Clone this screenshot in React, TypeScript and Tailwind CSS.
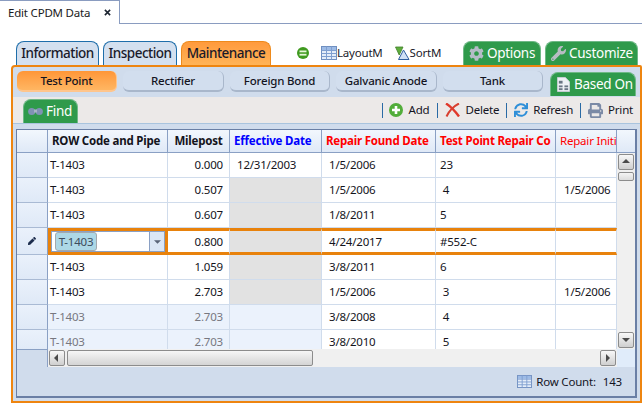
import { FaCog, FaPen, FaPrint, FaSync, FaWrench } from "react-icons/fa"

const cols = "grid grid-cols-[31px_120px_62px_92px_114px_120px_61px]"
const cellLine = "border-r border-b border-[#d0dcec]"

const rows = [
  { code: "T-1403", mile: "0.000", eff: "12/31/2003", found: "1/5/2006", repair: "23", init: "" },
  { code: "T-1403", mile: "0.507", eff: "", found: "1/5/2006", repair: " 4", init: "1/5/2006", gray: true },
  { code: "T-1403", mile: "0.607", eff: "", found: "1/8/2011", repair: "5", init: "", gray: true },
  { code: "T-1403", mile: "0.800", eff: "", found: "4/24/2017", repair: "#552-C", init: "", gray: true, editing: true },
  { code: "T-1403", mile: "1.059", eff: "", found: "3/8/2011", repair: "6", init: "", gray: true },
  { code: "T-1403", mile: "2.703", eff: "", found: "1/5/2006", repair: " 3", init: "1/5/2006", gray: true },
  { code: "T-1403", mile: "2.703", eff: "", found: "3/8/2008", repair: " 4", init: "", dim: true },
  { code: "T-1403", mile: "2.703", eff: "", found: "3/8/2010", repair: " 5", init: "", dim: true },
]

function GridIcon({ className }: { className?: string }) {
  return (
    <svg viewBox="0 0 16 14" className={className}>
      <rect x="0.5" y="0.5" width="15" height="13" fill="#e4edf9" stroke="#6f8fc0" />
      <rect x="1" y="1" width="14" height="3" fill="#9dbbe6" />
      <path d="M0.5 4.5h15M0.5 7.5h15M0.5 10.5h15M5.5 0.5v13M10.5 0.5v13" stroke="#7f9fd0" fill="none" />
    </svg>
  )
}

function MainTab({ label, active, width }: { label: string; active?: boolean; width: string }) {
  return (
    <div
      className={
        "h-[24px] flex items-center justify-center rounded-t-[8px] border border-b-0 text-[13.5px] font-medium tracking-[-0.5px] text-[#1a1a2a] " +
        width +
        " " +
        (active
          ? "border-[#ee8a1c] bg-gradient-to-b from-[#ff9a3c] to-[#ffb458]"
          : "border-[#1f6eaa] bg-[#d4e0ef]")
      }
    >
      {label}
    </div>
  )
}

function GreenTab({ children, className }: { children: React.ReactNode; className?: string }) {
  return (
    <div
      className={
        "h-[24px] flex items-center rounded-t-[8px] border border-b-0 border-[#6fb886] bg-[#2f9a4b] text-[13.5px] tracking-[-0.3px] text-white whitespace-nowrap " +
        className
      }
    >
      {children}
    </div>
  )
}

function SubButton({ label, active, width }: { label: string; active?: boolean; width: string }) {
  return (
    <div
      className={
        "h-[21px] flex items-center justify-center rounded-[6px] font-medium text-[#14141f] border-b-2 border-r " +
        width +
        " " +
        (active
          ? "bg-gradient-to-b from-[#ff9636] to-[#ffb662] border-[#ffc58c]"
          : "bg-[#d2deee] border-[#a9b7cb]")
      }
    >
      {label}
    </div>
  )
}

function ToolSep() {
  return <div className="w-[1px] h-[15px] bg-[#2a6aa5]" />
}

function ScrollButton({ dir, className }: { dir: "up" | "down" | "left" | "right"; className?: string }) {
  const path = {
    up: "M1 6 L5 2 L9 6 Z",
    down: "M1 3 L5 7 L9 3 Z",
    left: "M6 1 L2 5 L6 9 Z",
    right: "M3 1 L7 5 L3 9 Z",
  }[dir]
  return (
    <div
      className={
        "w-[16px] h-[16px] flex items-center justify-center rounded-[2px] border border-[#8c8c8c] bg-gradient-to-b from-[#f8f8f8] to-[#cfcfcf] " +
        (className ?? "")
      }
    >
      <svg viewBox="0 0 10 10" className="w-[10px] h-[10px]">
        <path d={path} fill="#4a4a4a" />
      </svg>
    </div>
  )
}

function Row({ row }: { row: (typeof rows)[number] }) {
  const text = row.dim ? "text-[#77777f]" : "text-[#14141c]"
  const leftBg = row.dim ? "bg-[#ebf2fc]" : "bg-white"
  if (row.editing) {
    const edge = "border-y-[3px] border-[#e8820c] border-r border-r-[#d0dcec] flex items-center bg-white"
    return (
      <div className={cols + " h-[27px] shrink-0 text-[#14141c]"}>
        <div className="flex items-center justify-center border-r border-b border-r-[#8aa0c4] border-b-[#a9bad4] bg-gradient-to-b from-[#eaf1fb] to-[#dfe9f7]">
          <FaPen className="w-[8px] h-[8px] text-[#1c2c4c]" />
        </div>
        <div className="border-[3px] border-[#e8820c] bg-white">
          <div className="h-full flex items-center border border-[#8aa0c4] pl-[3px]">
            <div className="h-[19px] w-[42px] flex items-center justify-center rounded-[3px] border border-[#a3a9ae] bg-[#add8e6] text-[#3c4c5c]">
              T-1403
            </div>
            <div className="ml-auto w-[15px] h-full flex items-center justify-center border-l border-[#8aa0c4] bg-[#dbe6f5]">
              <svg viewBox="0 0 8 4" className="w-[7px] h-[4px]">
                <path d="M0 0 H8 L4 4 Z" fill="#5a6478" />
              </svg>
            </div>
          </div>
        </div>
        <div className={edge + " justify-end pr-[6px]"}>{row.mile}</div>
        <div className="border-y-[3px] border-[#e8820c] border-r border-r-[#d0dcec] bg-[#e2e2e2]" />
        <div className={edge + " pl-[7px]"}>{row.found}</div>
        <div className={edge + " pl-[4px]"}>{row.repair}</div>
        <div className={edge} />
      </div>
    )
  }
  return (
    <div className={cols + " h-[25px] shrink-0 " + text}>
      <div className="border-r border-b border-r-[#8aa0c4] border-b-[#a9bad4] bg-gradient-to-b from-[#eaf1fb] to-[#dfe9f7]" />
      <div className={cellLine + " flex items-center pl-[2px] " + leftBg}>{row.code}</div>
      <div className={cellLine + " flex items-center justify-end pr-[6px] " + leftBg}>{row.mile}</div>
      <div className={cellLine + " flex items-center pl-[7px] " + (row.gray ? "bg-[#e2e2e2]" : leftBg)}>{row.eff}</div>
      <div className={cellLine + " flex items-center pl-[7px] bg-white text-[#14141c]"}>{row.found}</div>
      <div className={cellLine + " flex items-center pl-[4px] bg-white whitespace-pre text-[#14141c]"}>{row.repair}</div>
      <div className={cellLine + " flex items-center pl-[8px] bg-white text-[#14141c]"}>{row.init}</div>
    </div>
  )
}

export default function App() {
  const head = "flex items-center border-r border-[#8aa0c4] whitespace-nowrap overflow-hidden"
  return (
    <div className="w-[642px] h-[403px] overflow-hidden bg-white flex flex-col text-[11.5px] tracking-[-0.2px] font-['Noto_Sans','Open_Sans',sans-serif]">
      {/* document tab */}
      <div className="h-[24px] shrink-0 border-b border-[#8a9cc0] flex">
        <div className="w-[120px] h-[24px] flex items-center pl-[8px] bg-white border-r border-t border-[#8a9cc0] text-[#1a1a22]">
          Edit CPDM Data
          <svg viewBox="0 0 8 8" className="ml-[14px] w-[7px] h-[7px]">
            <path d="M1 1 L7 7 M7 1 L1 7" stroke="#1c2430" strokeWidth="1.8" />
          </svg>
        </div>
      </div>

      {/* main tabs */}
      <div className="h-[41px] shrink-0 flex items-end pl-[16px] pr-[4px]">
        <MainTab label="Information" width="w-[83px]" />
        <div className="ml-[4px]">
          <MainTab label="Inspection" width="w-[74px]" />
        </div>
        <div className="ml-[4px]">
          <MainTab label="Maintenance" active width="w-[90px]" />
        </div>
        <div className="h-[24px] ml-[26px] flex items-center text-[#1a1a2a]">
          <svg viewBox="0 0 12 12" className="w-[12px] h-[12px]">
            <circle cx="6" cy="6" r="6" fill="#3f9a1f" />
            <rect x="2.5" y="3.5" width="7" height="1.8" fill="#e6f5d8" />
            <rect x="2.5" y="6.8" width="7" height="1.8" fill="#e6f5d8" />
          </svg>
          <GridIcon className="ml-[12px] w-[16px] h-[14px]" />
          <span>LayoutM</span>
          <svg viewBox="0 0 15 14" className="ml-[12px] w-[15px] h-[14px]">
            <path d="M0.5 1 H8 L4.2 9 Z" fill="#5fae3c" stroke="#3f7f2a" strokeWidth="0.8" />
            <path d="M8.5 4 L14 13.5 H3.5 Z" fill="#cfe0f5" stroke="#2f5f9f" strokeWidth="1" />
          </svg>
          <span>SortM</span>
        </div>
        <GreenTab className="ml-auto w-[78px] pl-[5px]">
          <FaCog className="w-[15px] h-[15px] text-[#b4bcc8]" />
          <span className="ml-[3px]">Options</span>
        </GreenTab>
        <GreenTab className="ml-[4px] w-[93px] pl-[5px]">
          <FaWrench className="w-[15px] h-[15px] text-[#b8bcc4]" />
          <span className="ml-[3px]">Customize</span>
        </GreenTab>
      </div>

      {/* orange panel */}
      <div className="flex-1 min-h-0 ml-[11px] flex flex-col border-2 border-[#ee8510] rounded-tl-[4px] rounded-tr-[2px] bg-[#d0dcec]">
        <div className="h-[30px] shrink-0 flex items-start pl-[4px] pt-[4px] gap-[6px]">
          <SubButton label="Test Point" active width="w-[100px]" />
          <SubButton label="Rectifier" width="w-[101px]" />
          <SubButton label="Foreign Bond" width="w-[100px]" />
          <SubButton label="Galvanic Anode" width="w-[101px]" />
          <SubButton label="Tank" width="w-[100px]" />
          <GreenTab className="ml-[1px] mt-[1px] w-[86px] pl-[6px]">
            <svg viewBox="0 0 14 16" className="w-[13px] h-[15px]">
              <path d="M0.5 0.5 H9 L13.5 5 V15.5 H0.5 Z" fill="#eef1f5" stroke="#c8ced6" />
              <rect x="2" y="4" width="4" height="3" fill="#6a7684" />
              <rect x="2" y="9" width="4" height="2" fill="#6a7684" />
              <rect x="2" y="12" width="4" height="2" fill="#6a7684" />
              <rect x="8" y="9" width="4" height="2" fill="#6a7684" />
              <rect x="8" y="12" width="4" height="2" fill="#6a7684" />
            </svg>
            <span className="ml-[4px]">Based On</span>
          </GreenTab>
        </div>

        <div className="h-[26px] shrink-0 flex items-end justify-between pl-[10px] bg-[#ece9e8]">
          <GreenTab className="w-[55px] h-[23px] pl-[4px]">
            <svg viewBox="0 0 15 9" className="w-[15px] h-[9px]">
              <circle cx="3.7" cy="4.5" r="3.6" fill="#7f92b4" />
              <circle cx="11.3" cy="4.5" r="3.6" fill="#7f92b4" />
              <rect x="6" y="2.5" width="3" height="3" fill="#a8b4c8" />
            </svg>
            <span className="ml-[3px]">Find</span>
          </GreenTab>
          <div className="h-full flex items-center pr-[7px] text-[#14141f]">
            <ToolSep />
            <svg viewBox="0 0 14 14" className="ml-[6px] w-[14px] h-[14px]">
              <circle cx="7" cy="7" r="7" fill="#52ad3a" />
              <path d="M7 3 V11 M3 7 H11" stroke="#ffffff" strokeWidth="2.6" />
            </svg>
            <span className="ml-[6px] mr-[8px]">Add</span>
            <ToolSep />
            <svg viewBox="0 0 15 14" className="ml-[7px] w-[15px] h-[14px]">
              <path d="M1 0.5 C5 3 10 8 14 13.5" stroke="#e0392b" strokeWidth="2.4" fill="none" />
              <path d="M14 0.5 C9 3 4 8 1.5 13.5" stroke="#d8402f" strokeWidth="2" fill="none" />
            </svg>
            <span className="ml-[5px] mr-[7px]">Delete</span>
            <ToolSep />
            <FaSync className="ml-[6px] w-[16px] h-[14px] text-[#2f8fd8]" />
            <span className="ml-[4px] mr-[7px]">Refresh</span>
            <ToolSep />
            <FaPrint className="ml-[7px] w-[15px] h-[15px] text-[#7b8aa6]" />
            <span className="ml-[5px]">Print</span>
          </div>
        </div>

        {/* data grid */}
        <div className="flex-1 min-h-0 px-[3px] pt-[5px] pb-[3px] border-t border-[#a9c4de]">
          <div className="h-full flex flex-col border-2 border-t border-l border-[#6a7fa5]">
            <div className="h-[237px] shrink-0 flex flex-col bg-[#f0f0f0]">
              <div className="h-[219px] shrink-0 flex">
                <div className="w-[600px] shrink-0 flex flex-col overflow-hidden">
                  <div className={cols + " h-[23px] shrink-0 font-bold text-[#14141c] border-b border-[#8aa0c4] bg-gradient-to-b from-[#f2f7fd] to-[#dfe9f7]"}>
                    <div className={head} />
                    <div className={head + " pl-[4px]"}>ROW Code and Pipe</div>
                    <div className={head + " justify-center"}>Milepost</div>
                    <div className={head + " pl-[4px] text-[#0000ff]"}>Effective Date</div>
                    <div className={head + " pl-[4px] text-[#ff0000]"}>Repair Found Date</div>
                    <div className={head + " pl-[4px] text-[#ff0000]"}>Test Point Repair Co</div>
                    <div className={head + " pl-[4px] font-normal text-[#ff0000]"}>Repair Initi</div>
                  </div>
                  {rows.map((row, i) => (
                    <Row key={i} row={row} />
                  ))}
                </div>
                <div className="flex-1 flex flex-col">
                  <div className="h-[23px] shrink-0 border-b border-[#8aa0c4] bg-gradient-to-b from-[#f2f7fd] to-[#dfe9f7]" />
                  <div className="flex-1 flex flex-col items-center pt-[1px] pb-[1px]">
                    <ScrollButton dir="up" />
                    <div className="mt-[2px] w-[16px] h-[9px] rounded-[2px] border border-[#8c8c8c] bg-gradient-to-b from-[#f4f4f4] to-[#dcdcdc]" />
                    <ScrollButton dir="down" className="mt-auto" />
                  </div>
                </div>
              </div>
              <div className="h-[18px] shrink-0 flex">
                <div className="w-[31px] shrink-0 border-t border-r border-[#8aa0c4] bg-[#d0dcec]" />
                <div className="w-[569px] shrink-0 flex items-center pl-[1px]">
                  <ScrollButton dir="left" />
                  <div className="ml-[2px] w-[246px] h-[16px] rounded-[2px] border border-[#8c8c8c] bg-gradient-to-b from-[#f6f6f6] to-[#d4d4d4]" />
                  <ScrollButton dir="right" className="ml-auto mr-[1px]" />
                </div>
                <div className="flex-1 bg-[#e0ecfa]" />
              </div>
            </div>
            <div className="flex-1 flex items-center justify-end pr-[13px] text-[#14141f]">
              <GridIcon className="w-[15px] h-[13px]" />
              <span className="ml-[4px]">Row Count:</span>
              <span className="ml-[7px]">143</span>
            </div>
          </div>
        </div>
      </div>
    </div>
  )
}
